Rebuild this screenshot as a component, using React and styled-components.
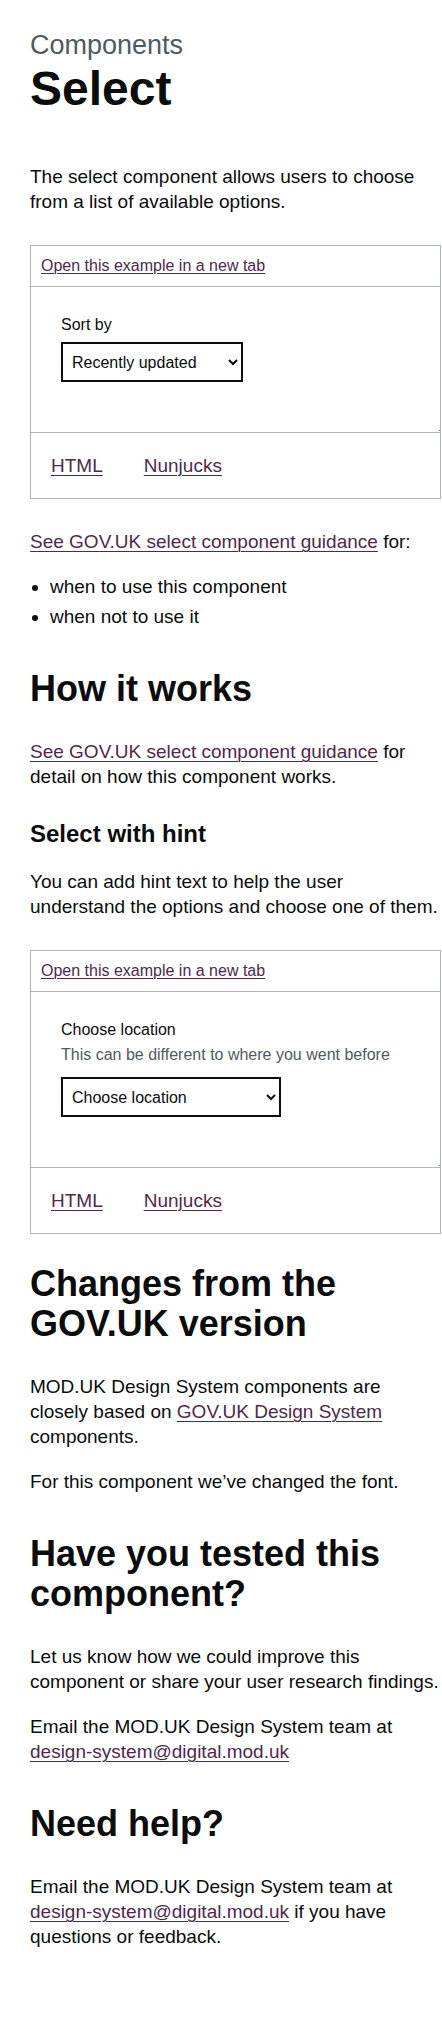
import React from 'react';
import styled, { createGlobalStyle } from 'styled-components';

const GlobalStyle = createGlobalStyle`
  body {
    margin: 0;
    background: #fff;
    color: #0b0c0c;
    font-family: 'Liberation Sans', Arial, sans-serif;
  }
`;

const LINK = '#50294a';

const Page = styled.main`
  width: 411px;
  padding: 30px 1px 40px 30px;
`;

const Caption = styled.span`
  display: block;
  font-size: 27px;
  line-height: 30px;
  color: #505a5f;
  margin-bottom: 4px;
`;

const Title = styled.h1`
  font-size: 48px;
  line-height: 50px;
  font-weight: 700;
  margin: 0 0 50px;
`;

const H2 = styled.h2`
  font-size: 36px;
  line-height: 40px;
  font-weight: 700;
  margin: ${(p) => (p.$afterBox ? '30px' : '40px')} 0 30px;
`;

const H3 = styled.h3`
  font-size: 24px;
  line-height: 30px;
  font-weight: 700;
  margin: 30px 0 20px;
`;

const Body = styled.p`
  font-size: 19px;
  line-height: 25px;
  margin: 0 0 20px;
`;

const Link = styled.a`
  color: ${LINK};
  text-decoration: underline;
  text-decoration-thickness: 1px;
  text-underline-offset: 0.15em;
  font-size: ${(p) => (p.$small ? '16px' : 'inherit')};
  line-height: ${(p) => (p.$small ? '20px' : 'inherit')};
`;

const List = styled.ul`
  font-size: 19px;
  line-height: 25px;
  margin: 0 0 20px;
  padding-left: 20px;

  li {
    margin-bottom: 5px;
  }
`;

const Example = styled.div`
  border: 1px solid #b1b4b6;
  margin: 31px 0 30px;
`;

const ExampleHead = styled.div`
  padding: 10px;
  font-size: 16px;
  line-height: 20px;
  border-bottom: 1px solid #b1b4b6;
`;

const Frame = styled.div`
  position: relative;
  height: ${(p) => p.$height}px;
  box-sizing: border-box;
  padding: 28px 30px;
  border-bottom: 1px solid #b1b4b6;

  &::after {
    content: '';
    position: absolute;
    right: 0;
    bottom: 1px;
    width: 1px;
    height: 1px;
    background: #6f777b;
  }
`;

const Label = styled.label`
  display: block;
  font-size: 16px;
  line-height: 20px;
  margin-bottom: ${(p) => p.$gap}px;
`;

const Hint = styled.div`
  font-size: 16px;
  line-height: 20px;
  color: #505a5f;
  margin-bottom: 12px;
`;

const Select = styled.select`
  display: block;
  box-sizing: border-box;
  width: ${(p) => p.$width}px;
  height: 40px;
  padding: 5px;
  border: 2px solid #0b0c0c;
  border-radius: 0;
  background: #fff;
  color: #0b0c0c;
  font-family: 'Liberation Sans', Arial, sans-serif;
  font-size: 16px;
  line-height: 1.25;
`;

const Tabs = styled.div`
  display: flex;
  gap: 41px;
  padding: 20px;
  font-size: 19px;
  line-height: 25px;
`;

function ExampleBox({ height, children }) {
  return (
    <Example>
      <ExampleHead>
        <Link $small href="#">Open this example in a new tab</Link>
      </ExampleHead>
      <Frame $height={height}>{children}</Frame>
      <Tabs>
        <Link href="#">HTML</Link>
        <Link href="#">Nunjucks</Link>
      </Tabs>
    </Example>
  );
}

export default function App() {
  return (
    <>
      <GlobalStyle />
      <Page>
        <Caption>Components</Caption>
        <Title>Select</Title>
        <Body>
          The select component allows users to choose from a list of available
          options.
        </Body>

        <ExampleBox height={146}>
          <Label $gap={7} htmlFor="sort">Sort by</Label>
          <Select id="sort" $width={182} defaultValue="updated">
            <option value="published">Recently published</option>
            <option value="updated">Recently updated</option>
            <option value="views">Most views</option>
            <option value="comments">Most comments</option>
          </Select>
        </ExampleBox>

        <Body>
          <Link href="#">See GOV.UK select component guidance</Link> for:
        </Body>
        <List>
          <li>when to use this component</li>
          <li>when not to use it</li>
        </List>

        <H2>How it works</H2>
        <Body>
          <Link href="#">See GOV.UK select component guidance</Link> for
          detail on how this component works.
        </Body>

        <H3>Select with hint</H3>
        <Body>
          You can add hint text to help the user understand the options and
          choose one of them.
        </Body>

        <ExampleBox height={176}>
          <Label $gap={5} htmlFor="location">Choose location</Label>
          <Hint>This can be different to where you went before</Hint>
          <Select id="location" $width={220} defaultValue="choose">
            <option value="choose">Choose location</option>
            <option value="eastmidlands">East Midlands</option>
            <option value="eastofengland">East of England</option>
            <option value="london">London</option>
          </Select>
        </ExampleBox>

        <H2 $afterBox>Changes from the GOV.UK version</H2>
        <Body>
          MOD.UK Design System components are closely based on{' '}
          <Link href="#">GOV.UK Design System</Link> components.
        </Body>
        <Body>For this component we’ve changed the font.</Body>

        <H2>Have you tested this component?</H2>
        <Body>
          Let us know how we could improve this component or share your user
          research findings.
        </Body>
        <Body>
          Email the MOD.UK Design System team at{' '}
          <Link href="#">design-system@digital.mod.uk</Link>
        </Body>

        <H2>Need help?</H2>
        <Body>
          Email the MOD.UK Design System team at{' '}
          <Link href="#">design-system@digital.mod.uk</Link> if you have
          questions or feedback.
        </Body>
      </Page>
    </>
  );
}
